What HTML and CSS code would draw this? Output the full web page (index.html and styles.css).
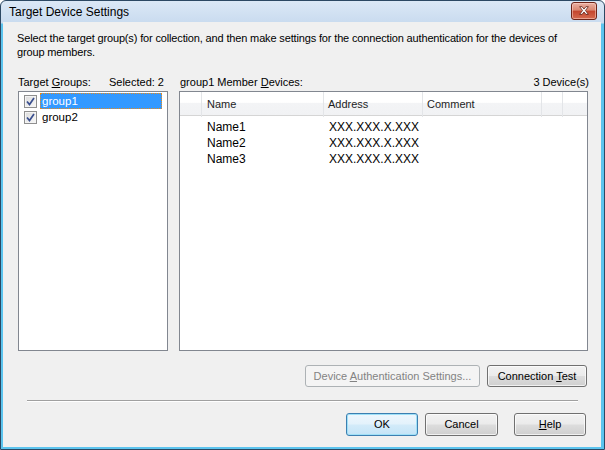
FILE: index.html
```html
<!DOCTYPE html>
<html>
<head>
<meta charset="utf-8">
<link rel="stylesheet" href="styles.css">
</head>
<body>
<div class="window">
  <div class="titlebar">
    <span class="title">Target Device Settings</span>
    <span class="close">
      <svg width="25" height="18" viewBox="0 0 25 18">
        <path d="M8 4.5 L10.5 4.5 L12.5 7 L14.5 4.5 L17 4.5 L14 8.5 L17 12.5 L14.5 12.5 L12.5 10 L10.5 12.5 L8 12.5 L11 8.5 Z" fill="#fff" stroke="#5a1a10" stroke-width="0.8" stroke-linejoin="round"/>
      </svg>
    </span>
  </div>
  <div class="client">
    <p class="intro">Select the target group(s) for collection, and then make settings for the connection authentication for the devices of<br>group members.</p>
    <div class="panes">
      <div class="pane pane-left">
        <div class="pane-head"><span>Target <u>G</u>roups:</span><span>Selected: 2</span></div>
        <div class="listbox">
          <div class="lb-item">
            <span class="check"><svg width="9" height="9" viewBox="0 0 9 9"><path d="M1 4.5 L3.5 7.5 L8 1" fill="none" stroke="#3a4f8f" stroke-width="1.7"/></svg></span>
            <span class="lb-label is-selected">group1</span>
          </div>
          <div class="lb-item">
            <span class="check"><svg width="9" height="9" viewBox="0 0 9 9"><path d="M1 4.5 L3.5 7.5 L8 1" fill="none" stroke="#3a4f8f" stroke-width="1.7"/></svg></span>
            <span class="lb-label">group2</span>
          </div>
        </div>
      </div>
      <div class="pane pane-right">
        <div class="pane-head"><span>group1 Member <u>D</u>evices:</span><span>3 Device(s)</span></div>
        <div class="listview">
          <div class="lv-header">
            <div class="hcol"></div>
            <div class="hcol">Name</div>
            <div class="hcol">Address</div>
            <div class="hcol">Comment</div>
            <div class="hcol"></div>
            <div class="hcol last"></div>
          </div>
          <div class="lv-body">
            <div class="lv-row"><span></span><span class="cell-name">Name1</span><span class="cell-addr">XXX.XXX.X.XXX</span></div>
            <div class="lv-row"><span></span><span class="cell-name">Name2</span><span class="cell-addr">XXX.XXX.X.XXX</span></div>
            <div class="lv-row"><span></span><span class="cell-name">Name3</span><span class="cell-addr">XXX.XXX.X.XXX</span></div>
          </div>
        </div>
      </div>
    </div>
    <div class="actions">
      <span class="btn btn-disabled btn-auth">Device <u>A</u>uthentication Settings...</span>
      <span class="btn btn-test">Connection <u>T</u>est</span>
    </div>
    <div class="separator"></div>
    <div class="dialog-buttons">
      <span class="btn btn-default btn-ok">OK</span>
      <span class="btn btn-cancel">Cancel</span>
      <span class="btn btn-help"><u>H</u>elp</span>
    </div>
  </div>
</div>
</body>
</html>
```

FILE: styles.css
```css
html, body {
  margin: 0;
  padding: 0;
}
body {
  width: 605px;
  height: 450px;
  overflow: hidden;
  background: #ffffff;
  font-family: "Liberation Sans", Arial, sans-serif;
  font-size: 11px;
  color: #000;
}
.window {
  box-sizing: border-box;
  width: 605px;
  height: 450px;
  border: 1px solid #2c4863;
  border-radius: 6px 6px 0 0;
  background: linear-gradient(#dbe8f6, #c9dbef 22px, #5cc4ee 23px, #5cc4ee);
  padding: 0 3px 2px 2px;
  display: flex;
  flex-direction: column;
}
.titlebar {
  height: 21px;
  flex: none;
  display: flex;
  align-items: flex-start;
  justify-content: space-between;
  padding-left: 6px;
}
.title {
  font-size: 12px;
  line-height: 12px;
  margin-top: 5px;
  color: #000;
}
.close {
  box-sizing: border-box;
  width: 26px;
  height: 18px;
  margin-top: 1px;
  margin-right: 4px;
  border: 1px solid #6e2418;
  border-radius: 3px;
  background: linear-gradient(#eab0a3, #d98670 45%, #c4452d 50%, #d56a4f 100%);
  box-shadow: inset 0 0 0 1px rgba(255, 220, 210, 0.5);
  display: flex;
  align-items: center;
  justify-content: center;
}
.close svg {
  display: block;
}
.client {
  flex: 1;
  background: #f0f0f0;
  padding: 0 13px 0 15px;
  display: flex;
  flex-direction: column;
}
.intro {
  margin: 9px 0 0 -1px;
  line-height: 14px;
  letter-spacing: -0.15px;
}
.panes {
  margin-top: 16px;
  display: flex;
  gap: 11px;
}
.pane {
  display: flex;
  flex-direction: column;
}
.pane-left {
  width: 150px;
}
.pane-right {
  flex: 1;
}
.pane-head {
  height: 14px;
  line-height: 14px;
  display: flex;
  justify-content: space-between;
  margin-bottom: 2px;
}
.pane-left .pane-head {
  padding-right: 4px;
}
.pane-right .pane-head {
  padding-left: 1px;
  margin-right: -1px;
}
.listbox, .listview {
  box-sizing: border-box;
  height: 260px;
  border: 1px solid #828790;
  background: #fff;
}
.listbox {
  padding: 1px 5px 0 5px;
}
.lb-item {
  height: 16px;
  display: flex;
  align-items: center;
}
.check {
  box-sizing: border-box;
  width: 13px;
  height: 13px;
  flex: none;
  border: 1px solid #8f8f8f;
  background: linear-gradient(135deg, #dcdcdc, #f8f8f8);
  box-shadow: inset 0 0 0 1px #f4f4f4;
  display: flex;
  align-items: center;
  justify-content: center;
}
.lb-label {
  margin-left: 3px;
  flex: 1;
  height: 16px;
  line-height: 16px;
  font-size: 11.5px;
  padding-left: 2px;
  box-sizing: border-box;
}
.lb-label.is-selected {
  background: #3399ff;
  color: #fff;
  outline: 1px dotted #e88a1a;
  outline-offset: -1px;
}
.listview {
  display: flex;
  flex-direction: column;
}
.lv-header, .lv-row {
  display: grid;
  grid-template-columns: 22px 122px 99px 119px 21px 1fr;
}
.lv-header {
  height: 23px;
  border-bottom: 1px solid #d5d5d5;
  background: linear-gradient(#ffffff, #ffffff 45%, #f3f4f6 50%, #f1f2f4);
}
.hcol {
  border-right: 1px solid #e3e5e8;
  line-height: 25px;
  padding-left: 4px;
  color: #1e1e1e;
}
.hcol:nth-child(2) {
  padding-left: 5px;
}
.hcol.last {
  border-right: none;
}
.lv-body {
  padding-top: 3px;
}
.lv-row {
  height: 16px;
  line-height: 16px;
  font-size: 12px;
}
.cell-name {
  padding-left: 5px;
}
.cell-addr {
  padding-left: 5px;
  grid-column: span 2;
}
.actions {
  margin-top: 14px;
  display: flex;
  justify-content: flex-end;
  gap: 7px;
  padding-right: 1px;
}
.btn {
  box-sizing: border-box;
  height: 22px;
  line-height: 20px;
  border: 1px solid #707070;
  border-radius: 3px;
  background: linear-gradient(#f2f2f2, #ebebeb 48%, #dddddd 52%, #cfcfcf);
  box-shadow: inset 0 0 0 1px rgba(255, 255, 255, 0.7);
  text-align: center;
  color: #000;
}
.btn-auth {
  width: 175px;
}
.btn-test {
  width: 100px;
}
.btn-disabled {
  border-color: #adb2b5;
  background: #f4f4f4;
  color: #838383;
  box-shadow: none;
}
.separator {
  margin: 13px 10px 0 9px;
  height: 1px;
  border-top: 1px solid #a0a0a0;
  border-bottom: 1px solid #ffffff;
  height: 0;
}
.dialog-buttons {
  margin-top: 11px;
  display: flex;
  justify-content: flex-end;
  padding-right: 2px;
}
.dialog-buttons .btn {
  height: 23px;
  line-height: 21px;
}
.btn-ok {
  width: 72px;
}
.btn-cancel {
  width: 73px;
  margin-left: 7px;
}
.btn-help {
  width: 72px;
  margin-left: 16px;
}
.btn-default {
  border-color: #3c7fb1;
  background: linear-gradient(#eef7fd, #e3f2fb 48%, #d3ebf9 52%, #c4e4f7);
  box-shadow: inset 0 0 0 1px #9fe0f7;
}
```
